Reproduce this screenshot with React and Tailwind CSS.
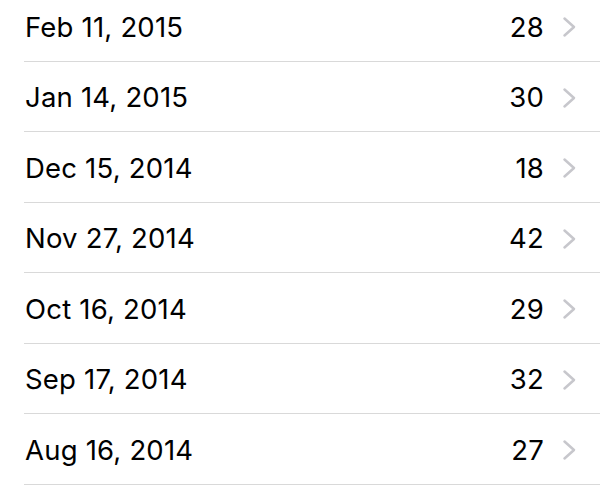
import React from "react";

const rows = [
  ["Feb 11, 2015", "28"],
  ["Jan 14, 2015", "30"],
  ["Dec 15, 2014", "18"],
  ["Nov 27, 2014", "42"],
  ["Oct 16, 2014", "29"],
  ["Sep 17, 2014", "32"],
  ["Aug 16, 2014", "27"],
];

function Chevron() {
  return (
    <svg width="15" height="22" viewBox="0 0 15 22" className="block">
      <path d="M2.5 2.5 L12 11 L2.5 19.5" fill="none" stroke="#c7c7cc" strokeWidth="2.5" strokeLinecap="round" strokeLinejoin="round" />
    </svg>
  );
}

export default function App() {
  return (
    <div className="w-[600px] h-[499px] overflow-hidden bg-white" style={{ fontFamily: "Inter, 'Noto Sans', sans-serif" }}>
      <div className="-mt-[9px] flex flex-col">
        {rows.map(([d, n]) => (
          <div key={d} className="pl-[24px] h-[70.5px]">
            <div className="h-full flex items-center border-b border-[#d9d9d9] pr-[23px] pt-[3px]">
              <div className="flex-1 text-[27.5px] text-black tracking-[0.2px] pl-px">{d}</div>
              <div className="text-[27.5px] text-black tracking-[0.2px] mr-[18px]">{n}</div>
              <Chevron />
            </div>
          </div>
        ))}
      </div>
    </div>
  );
}
